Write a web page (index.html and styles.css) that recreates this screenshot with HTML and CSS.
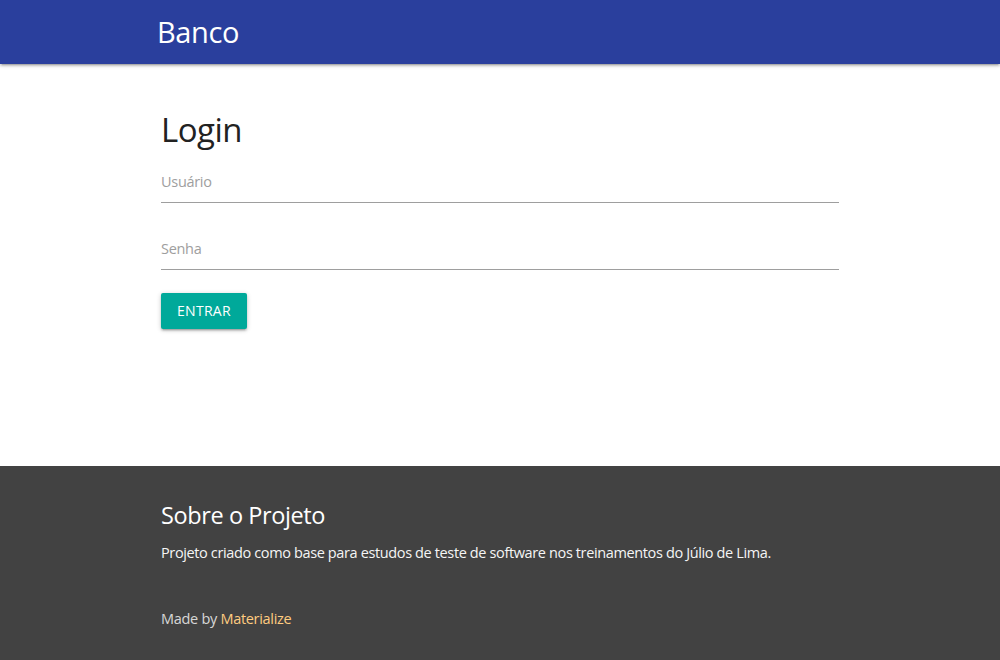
FILE: index.html
```html
<!DOCTYPE html>
<html lang="pt-br">
<head>
<meta charset="utf-8">
<title>Banco</title>
<link rel="stylesheet" href="styles.css">
</head>
<body>
<nav class="navbar">
  <div class="container">
    <a class="brand" href="#">Banco</a>
  </div>
</nav>
<main class="main">
  <div class="container">
    <div class="col">
      <h4 class="title">Login</h4>
      <form class="form">
        <div class="field"><input class="input" type="text" placeholder="Usuário"></div>
        <div class="field"><input class="input" type="password" placeholder="Senha"></div>
        <button class="btn" type="button">Entrar</button>
      </form>
    </div>
  </div>
</main>
<footer class="footer">
  <div class="container">
    <div class="col">
      <h5 class="footer-title">Sobre o Projeto</h5>
      <p class="footer-text">Projeto criado como base para estudos de teste de software nos treinamentos do Júlio de Lima.</p>
    </div>
  </div>
  <div class="copyright">
    <div class="container">
      <div class="col">Made by <a class="link" href="#">Materialize</a></div>
    </div>
  </div>
</footer>
</body>
</html>
```
FILE: styles.css
```css
html, body {
  margin: 0;
  padding: 0;
}
body {
  font-family: "Open Sans", "Noto Sans", sans-serif;
  font-size: 14.5px;
  line-height: 1.5;
  color: rgba(0,0,0,0.87);
  background: #fff;
  height: 660px;
  overflow: hidden;
}
.container {
  width: 700px;
  margin: 0 auto;
}
.col {
  padding: 0 11px;
}
.navbar {
  height: 64px;
  background: #2a3f9d;
  box-shadow: 0 2px 2px 0 rgba(0,0,0,0.14), 0 3px 1px -2px rgba(0,0,0,0.12), 0 1px 5px 0 rgba(0,0,0,0.2);
  position: relative;
  z-index: 2;
}
.brand {
  display: inline-block;
  padding-left: 7px;
  color: #fff;
  text-decoration: none;
  font-size: 29px;
  line-height: 64px;
  letter-spacing: -0.4px;
}
.main {
  height: 402px;
}
.title {
  margin: 0;
  padding-top: 40px;
  font-size: 33px;
  font-weight: 400;
  line-height: 52px;
  color: #222;
  letter-spacing: -0.5px;
}
.form {
  display: flex;
  flex-direction: column;
  align-items: flex-start;
  padding-top: 2px;
}
.field {
  width: 100%;
  margin-top: 14.5px;
}
.field:first-child {
  margin-top: 0;
}
.input {
  display: block;
  box-sizing: border-box;
  width: 100%;
  height: 44.5px;
  margin: 0 0 8px;
  padding: 0;
  border: none;
  border-bottom: 1px solid #9e9e9e;
  outline: none;
  background: transparent;
  font-family: inherit;
  font-size: 14.5px;
  padding-top: 3px;
}
.input::placeholder {
  color: #9e9e9e;
  letter-spacing: -0.3px;
}
.btn {
  margin-top: 15px;
  height: 36px;
  padding: 0 16px;
  border: none;
  border-radius: 2px;
  background: #00a99a;
  color: #fff;
  font-family: inherit;
  font-size: 14px;
  letter-spacing: 0.3px;
  text-transform: uppercase;
  box-shadow: 0 2px 2px 0 rgba(0,0,0,0.14), 0 3px 1px -2px rgba(0,0,0,0.12), 0 1px 5px 0 rgba(0,0,0,0.2);
  cursor: pointer;
}
.footer {
  background: #424242;
  height: 194px;
  padding-top: 20px;
  box-sizing: border-box;
}
.footer-title {
  margin: 16px 0 0;
  font-size: 23.5px;
  font-weight: 400;
  line-height: 26px;
  color: #fff;
  letter-spacing: -0.4px;
}
.footer-text {
  margin: 14px 0 0;
  color: #f5f5f5;
  line-height: 22px;
  letter-spacing: -0.37px;
}
.copyright {
  margin-top: 30px;
  height: 50px;
  line-height: 50px;
  color: rgba(255,255,255,0.8);
  letter-spacing: -0.3px;
}
.link {
  color: #ffcc80;
  text-decoration: none;
}
```
